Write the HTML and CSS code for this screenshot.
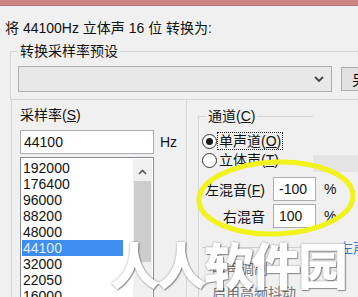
FILE: index.html
```html
<!DOCTYPE html>
<html lang="zh-CN">
<head>
  <meta charset="UTF-8" />
  <title>转换采样类型</title>
  <link rel="stylesheet" href="styles.css">
</head>
<body>
  <div class="titlebar"></div>
  <div class="dialog">
    <p class="caption">将 44100Hz 立体声 16 位 转换为:</p>

    <fieldset class="group preset">
      <legend>转换采样率预设</legend>
      <div class="preset-row">
        <div class="combo">
          <svg class="chevron" width="10" height="6" viewBox="0 0 10 6"><path d="M1 1 L5 5 L9 1" fill="none" stroke="#444" stroke-width="1.8"/></svg>
        </div>
        <button class="btn">另存为...</button>
      </div>
    </fieldset>

    <div class="columns">
      <div class="rate-panel">
        <div class="label">采样率(<u>S</u>)</div>
        <div class="rate-row">
          <div class="textbox">44100</div>
          <span class="unit">Hz</span>
        </div>
        <div class="listbox">
          <ul class="items">
            <li>192000</li>
            <li>176400</li>
            <li>96000</li>
            <li>88200</li>
            <li>48000</li>
            <li class="selected">44100</li>
            <li>32000</li>
            <li>22050</li>
            <li>16000</li>
          </ul>
          <div class="scrollbar">
            <div class="arrow">
              <svg width="9" height="6" viewBox="0 0 9 6"><path d="M1 5 L4.5 1.5 L8 5" fill="none" stroke="#555" stroke-width="1.6"/></svg>
            </div>
            <div class="thumb"></div>
          </div>
        </div>
      </div>

      <div class="channel-panel">
        <div class="channel-top">
          <fieldset class="group channel">
            <legend>通道(<u>C</u>)</legend>
            <div class="radio-row">
              <span class="radio checked"></span>
              <span class="radio-label focus">单声道(<u>O</u>)</span>
            </div>
            <div class="radio-row">
              <span class="radio"></span>
              <span class="radio-label">立体声(<u>T</u>)</span>
            </div>
            <div class="mix-grid">
              <span class="mix-label">左混音(<u>F</u>)</span>
              <div class="small-box">-100</div>
              <span>%</span>
              <span class="mix-label">右混音</span>
              <div class="small-box">100</div>
              <span>%</span>
            </div>
            <div class="sub-head">
              <div class="rule"></div>
              <span class="link">左声道</span>
            </div>
            <div class="faint-row">噪声调制</div>
            <div class="faint-row">启用高频抖动</div>
          </fieldset>
          <div class="ghost"></div>
        </div>
      </div>
    </div>
  </div>

  <svg class="marker" width="164" height="84" viewBox="0 0 164 84">
    <ellipse cx="81" cy="41" rx="77" ry="36" transform="rotate(-2 81 41)" fill="none" stroke="#f2f21c" stroke-width="5"/>
  </svg>
  <div class="watermark">人人软件园</div>
</body>
</html>
```

FILE: styles.css
```css
body {
  margin: 0;
  width: 358px;
  height: 297px;
  overflow: hidden;
  position: relative;
  background: #f0f0f0;
  font-family: "Liberation Sans", "Noto Sans CJK SC", sans-serif;
  font-size: 14px;
  color: #111;
}
.titlebar {
  height: 6px;
  background: #cc8485;
  border-bottom: 1px solid #b87374;
  box-sizing: border-box;
}
.caption {
  margin: 13px 0 0 5px;
  line-height: 18px;
  white-space: nowrap;
}
.group {
  margin: 0;
  padding: 0;
  min-width: 0;
  border: 1px solid #d6d6d6;
}
.group legend {
  padding: 0 2px;
  line-height: 16px;
}
.preset {
  margin: 6px 0 0 10px;
  width: 420px;
  padding: 7px 0 7px 7px;
}
.preset-row {
  display: flex;
  align-items: center;
}
.combo {
  width: 314px;
  height: 26px;
  box-sizing: border-box;
  border: 1px solid #adadad;
  background: #e8e8e8;
  display: flex;
  align-items: center;
  justify-content: flex-end;
  padding-right: 7px;
}
.btn {
  margin-left: 9px;
  width: 80px;
  height: 24px;
  border: 1px solid #adadad;
  background: #e1e1e1;
  font: inherit;
  text-align: left;
  padding: 0 0 0 10px;
}
.columns {
  display: flex;
  margin-left: 11px;
  height: 220px;
}
.rate-panel {
  width: 185px;
  box-sizing: border-box;
  border-left: 1px solid #d6d6d6;
  border-right: 1px solid #d6d6d6;
  padding-left: 8px;
}
.label {
  margin-top: 6px;
  line-height: 18px;
}
.rate-row {
  display: flex;
  align-items: center;
  margin-top: 6px;
}
.textbox {
  width: 134px;
  height: 24px;
  box-sizing: border-box;
  border: 1px solid #abadb3;
  background: #fff;
  padding-left: 3px;
  line-height: 22px;
}
.unit {
  margin-left: 6px;
}
.listbox {
  margin-top: 3px;
  width: 134px;
  height: 160px;
  box-sizing: border-box;
  border: 1px solid #8a8d93;
  background: #fff;
  padding: 1px;
  display: flex;
}
.items {
  list-style: none;
  margin: 0;
  padding: 1px 0 0;
  flex: 1;
}
.items li {
  width: 101px;
  height: 16px;
  line-height: 16px;
  padding-left: 1px;
  box-sizing: border-box;
}
.items li.selected {
  background: #3d8eef;
  color: #e4efff;
}
.scrollbar {
  width: 19px;
  background: #f0f0f0;
}
.arrow {
  height: 22px;
  display: flex;
  align-items: center;
  justify-content: center;
  padding-top: 4px;
  box-sizing: border-box;
}
.thumb {
  margin: 0 1px;
  height: 81px;
  background: #cdcdcd;
}
.channel-panel {
  flex: 1;
}
.channel-top {
  display: flex;
  margin-top: 8px;
}
.channel {
  margin-left: 11px;
  width: 111px;
  height: 240px;
  border-right: 0;
  border-bottom: 0;
  padding: 8px 0 0 3px;
}
.channel legend {
  margin-left: 4px;
}
.radio-row {
  display: flex;
  align-items: center;
  height: 18px;
  white-space: nowrap;
}
.radio-row + .radio-row {
  margin-top: 1px;
}
.radio {
  width: 15px;
  height: 15px;
  box-sizing: border-box;
  border: 1px solid #333;
  border-radius: 50%;
  background: #fff;
  display: flex;
  align-items: center;
  justify-content: center;
  flex: none;
}
.radio.checked::after {
  content: "";
  width: 7px;
  height: 7px;
  border-radius: 50%;
  background: #1a1a1a;
}
.radio-label {
  margin-left: 1px;
  padding: 0 1px;
  line-height: 16px;
}
.radio-label.focus {
  outline: 1px dotted #222;
}
.mix-grid {
  display: grid;
  grid-template-columns: 62px 43px auto;
  column-gap: 8px;
  row-gap: 3px;
  align-items: center;
  margin: 8px 0 0 1px;
  width: 140px;
  white-space: nowrap;
}
.mix-label {
  text-align: right;
}
.small-box {
  height: 24px;
  box-sizing: border-box;
  border: 1px solid #abadb3;
  background: #fff;
  padding-left: 5px;
  line-height: 22px;
}
.sub-head {
  display: flex;
  align-items: center;
  margin-top: 9px;
  width: 170px;
  white-space: nowrap;
}
.rule {
  flex: 0 0 120px;
  border-top: 1px solid #d0d0d0;
}
.link {
  margin-left: 17px;
  color: #3a7fc6;
}
.faint-row {
  color: #777;
  margin-left: 10px;
  line-height: 24px;
  white-space: nowrap;
}
.ghost {
  margin-top: 47px;
  width: 45px;
  height: 17px;
  background: #e4e4e4;
}
.marker {
  position: absolute;
  left: 195px;
  top: 157px;
}
.watermark {
  position: absolute;
  left: 110px;
  top: 238px;
  font-family: "Noto Sans CJK SC", sans-serif;
  font-weight: 900;
  font-size: 50px;
  line-height: 1;
  letter-spacing: -3px;
  color: #fff;
  text-shadow: 0 0 2px rgba(0, 0, 0, 0.45), 1px 1px 1px rgba(0, 0, 0, 0.35);
  white-space: nowrap;
}
```
